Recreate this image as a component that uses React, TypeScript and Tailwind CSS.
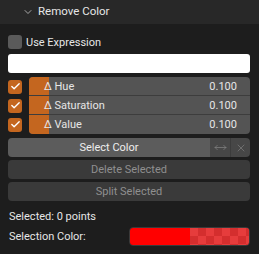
import { ChevronDown, Check, X, MoveHorizontal } from "lucide-react";

const sliders = ["Hue", "Saturation", "Value"];

const SliderRow = ({ label, first, last }: { label: string; first: boolean; last: boolean }) => (
  <div className="flex items-center h-[19px]">
    <div className="w-[21px] flex">
      <div className="w-[14px] h-[14px] rounded-[3px] bg-[#c4661f] flex items-center justify-center">
        <Check size={11} strokeWidth={3} color="#ffffff" />
      </div>
    </div>
    <div
      className={`flex-1 h-full flex items-center bg-[#545454] relative ${first ? "rounded-t-[4px]" : ""} ${
        last ? "rounded-b-[4px]" : "border-b border-[#3d3d3d]"
      }`}
    >
      <div className={`w-[20px] h-full bg-[#c4661f] ${first ? "rounded-tl-[4px]" : ""} ${last ? "rounded-bl-[4px]" : ""}`} />
      <span className="absolute left-[15px] text-[#e6e6e6]">Δ {label}</span>
      <span className="ml-auto pr-[13px] text-[#e6e6e6]">0.100</span>
    </div>
  </div>
);

export default function App() {
  return (
    <div className="w-[259px] h-[254px] bg-[#1d1d1d] font-['Roboto','DejaVu_Sans',sans-serif] text-[11px] leading-none overflow-hidden">
      <div className="h-[24px] bg-[#282828] flex items-center pl-[22px] gap-[4px] text-[#e6e6e6] text-[11.5px]">
        <ChevronDown size={12} strokeWidth={1.5} color="#cfcfcf" />
        <span>Remove Color</span>
      </div>
      <div className="pl-[8px] pr-[9px] flex flex-col">
        <div className="flex items-center gap-[4px] mt-[11px] h-[14px]">
          <div className="w-[14px] h-[14px] rounded-[3px] bg-[#5a5a5a]" />
          <span className="text-[#e6e6e6]">Use Expression</span>
        </div>
        <div className="mt-[5px] h-[19px] bg-white rounded-[3px]" />
        <div className="mt-[4px] flex flex-col">
          {sliders.map((s, i) => (
            <SliderRow key={s} label={s} first={i === 0} last={i === sliders.length - 1} />
          ))}
        </div>
        <div className="mt-[4px] h-[19px] flex rounded-[4px] overflow-hidden">
          <div className="flex-1 bg-[#5c5c5c] flex items-center justify-center text-[#eeeeee]">Select Color</div>
          <div className="w-[20px] bg-[#474747] flex items-center justify-center">
            <MoveHorizontal size={13} strokeWidth={1.2} color="#8a8a8a" />
          </div>
          <div className="w-[20px] bg-[#474747] border-l border-[#3c3c3c] flex items-center justify-center">
            <X size={12} strokeWidth={1.2} color="#8a8a8a" />
          </div>
        </div>
        <div className="mt-[3px] h-[19px] bg-[#3a3a3a] rounded-[4px] flex items-center justify-center text-[#8f8f8f]">
          Delete Selected
        </div>
        <div className="mt-[3px] h-[19px] bg-[#3a3a3a] rounded-[4px] flex items-center justify-center text-[#8f8f8f]">
          Split Selected
        </div>
        <div className="mt-[8px] h-[14px] pl-[1px] flex items-center text-[#e6e6e6]">Selected: 0 points</div>
        <div className="mt-[4px] flex items-center h-[19px]">
          <span className="pl-[1px] text-[#e6e6e6] w-[121px]">Selection Color:</span>
          <div className="flex-1 h-full rounded-[4px] border border-[#3a3a3a] flex overflow-hidden">
            <div className="w-[60px] bg-[#ff0000]" />
            <div className="flex-1 bg-[#e63c3c] bg-[linear-gradient(45deg,#d42e2e_25%,transparent_25%,transparent_75%,#d42e2e_75%),linear-gradient(45deg,#d42e2e_25%,transparent_25%,transparent_75%,#d42e2e_75%)] bg-[length:16px_16px] bg-[position:0_0,8px_8px]" />
          </div>
        </div>
      </div>
    </div>
  );
}
